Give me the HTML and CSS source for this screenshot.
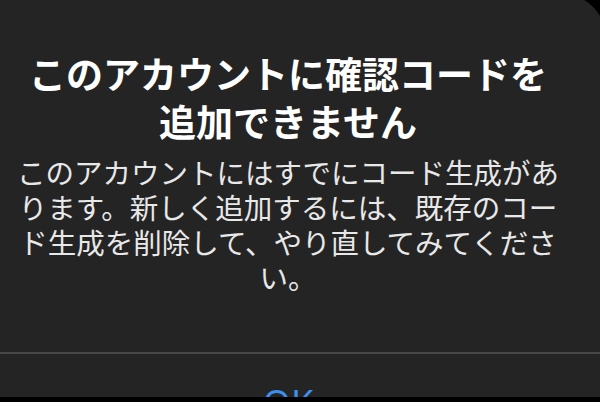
FILE: index.html
```html
<!DOCTYPE html>
<html lang="ja">
<head>
<meta charset="utf-8">
<title>確認コード</title>
<link rel="stylesheet" href="styles.css">
</head>
<body>
<div class="screen">
  <div class="dialog">
    <div class="content">
      <h1 class="title">このアカウントに確認コードを<br>追加できません</h1>
      <p class="message">このアカウントにはすでにコード生成があ<br>ります。新しく追加するには、既存のコー<br>ド生成を削除して、やり直してみてくださ<br>い。</p>
    </div>
    <div class="actions">
      <button class="action">OK</button>
    </div>
  </div>
</div>
</body>
</html>
```

FILE: styles.css
```css
html, body {
  margin: 0;
  padding: 0;
  background: #000;
}
.screen {
  width: 600px;
  height: 402px;
  overflow: hidden;
  background: #000;
  font-family: "Noto Sans CJK JP", "Noto Sans", sans-serif;
}
.dialog {
  margin: -6px -6px 0 -40px;
  height: 403px;
  background: #242424;
  border-top-right-radius: 44px;
  display: flex;
  flex-direction: column;
  overflow: hidden;
}
.content {
  padding: 55px 10px 0 20px;
  height: 358px;
  flex: none;
  box-sizing: border-box;
  text-align: center;
}
.title {
  margin: 0;
  font-size: 37px;
  line-height: 48px;
  font-weight: 700;
  color: #fff;
  white-space: nowrap;
}
.message {
  margin: 9px 0 0;
  font-size: 28.5px;
  line-height: 35px;
  font-weight: 400;
  color: #e8e8e8;
  white-space: nowrap;
}
.actions {
  border-top: 2px solid #474747;
  padding: 27px 10px 0 20px;
  display: flex;
  justify-content: center;
}
.action {
  background: none;
  border: 0;
  padding: 0;
  font-family: "Noto Sans", sans-serif;
  font-size: 36px;
  line-height: 44px;
  color: #3d8ef0;
  font-weight: 400;
}
```
